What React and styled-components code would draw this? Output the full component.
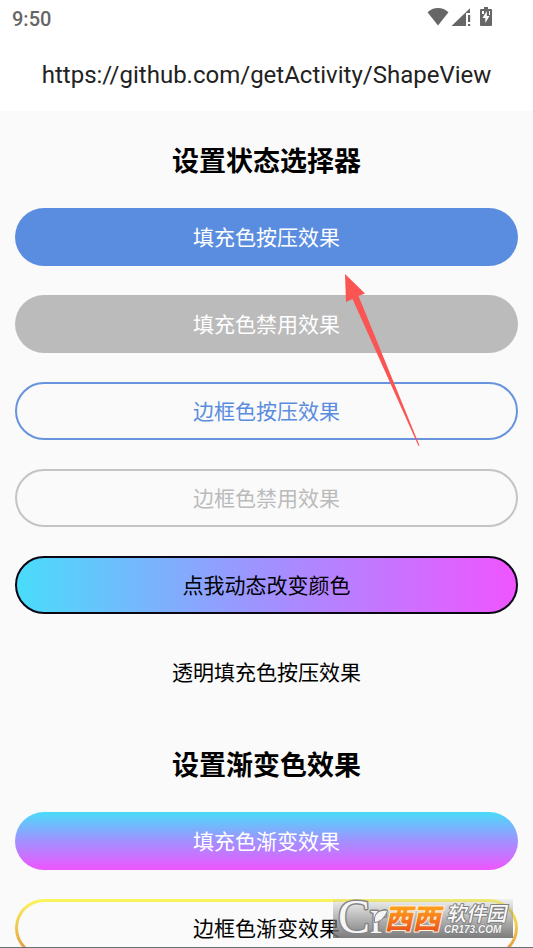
import { useState } from "react"
import styled, { createGlobalStyle, css } from "styled-components"

const GlobalStyle = createGlobalStyle`
  * {
    box-sizing: border-box;
  }
  body {
    margin: 0;
    background: #fafafa;
    font-family: Roboto, "Noto Sans CJK SC", sans-serif;
  }
`

const StatusIcons = () => (
  <svg width="66" height="20" viewBox="0 0 66 20" fill="#666" aria-hidden="true">
    <path d="M11 18.500 0.500 5.200C3.500 2.500 7 1 11 1s7.500 1.500 10.500 4.200z" />
    <path d="M43 1.200V6h-4v13H24.500z" />
    <path d="M41 8h2.200v7H41zM41 17h2.200v2H41z" />
    <path
      fillRule="evenodd"
      d="M57 0h4v2h3q1 0 1 1v15q0 1-1 1H54q-1 0-1-1V3q0-1 1-1h3zM59.800 4l-4.300 7h2.800v5l4.200-7h-2.700z"
    />
    <path d="M55 4h2v3h-2zM62 4h1v4h-1z" fill="#fff" />
  </svg>
)

const PointerArrow = () => (
  <svg width="78" height="176" viewBox="0 0 78 176" aria-hidden="true">
    <path d="M1 2 21 21.500 14.500 24 75.500 173.500 74.500 174 8.500 27 2 30z" fill="#fa5552" />
  </svg>
)

const LogoMark = () => (
  <svg width="180" height="39" viewBox="0 0 180 39" overflow="visible" role="img" aria-label="CR173.COM">
    <defs>
      <linearGradient id="badgeOrange" x1="0" y1="0" x2="0" y2="1">
        <stop offset="0.3" stopColor="#ff9c1c" />
        <stop offset="0.9" stopColor="#e8501c" />
      </linearGradient>
    </defs>
    <g stroke="#858585" strokeWidth="3" paintOrder="stroke" strokeLinejoin="round" fill="#f5f5f5">
      <text x="5" y="34" fontFamily="Liberation Serif, serif" fontSize="48">Cr</text>
      <path d="M42 23C41 14 47 11 54 12q-4 10-12 11z" strokeWidth="2" />
    </g>
    <g
      transform="skewX(-12)"
      fontFamily="'Noto Sans CJK SC', sans-serif"
      fontWeight="900"
      paintOrder="stroke"
      strokeLinejoin="round"
    >
      <text x="58" y="30" fontSize="28" fill="url(#badgeOrange)" stroke="#fff2df" strokeWidth="2">西西</text>
      <text x="118" y="22" fontSize="20" fontWeight="500" fill="#f8f8f8" stroke="#808080" strokeWidth="2">软件园</text>
    </g>
    <text
      x="111"
      y="34"
      fontFamily="'Liberation Sans', sans-serif"
      fontStyle="italic"
      fontSize="10"
      fontWeight="bold"
      fill="#f5f5f5"
      stroke="#777"
      strokeWidth="1"
      paintOrder="stroke"
    >
      CR173.COM
    </text>
  </svg>
)

const palettes = [
  ["#49dcfa", "#ef55ff"],
  ["#ffe66d", "#ff6b6b"],
]

const App = () => {
  const [palette, setPalette] = useState(0)
  const [from, to] = palettes[palette]

  return (
    <>
      <GlobalStyle />
      <Screen>
        <StatusBar>
          <Clock>9:50</Clock>
          <StatusIcons />
        </StatusBar>
        <TitleBar>
          <TitleLink href="https://github.com/getActivity/ShapeView">
            https://github.com/getActivity/ShapeView
          </TitleLink>
        </TitleBar>
        <Content>
          <Section>
            <Heading>设置状态选择器</Heading>
            <ShapeButton $variant="fill">填充色按压效果</ShapeButton>
            <ShapeButton $variant="fillDisabled" disabled>填充色禁用效果</ShapeButton>
            <ShapeButton $variant="stroke">边框色按压效果</ShapeButton>
            <ShapeButton $variant="strokeDisabled" disabled>边框色禁用效果</ShapeButton>
            <ShapeButton $variant="dynamic" $from={from} $to={to} onClick={() => setPalette(1 - palette)}>
              点我动态改变颜色
            </ShapeButton>
            <ShapeButton>透明填充色按压效果</ShapeButton>
          </Section>
          <Section>
            <Heading>设置渐变色效果</Heading>
            <ShapeButton $variant="gradient">填充色渐变效果</ShapeButton>
            <ShapeButton $variant="gradientStroke">边框色渐变效果</ShapeButton>
          </Section>
        </Content>
        <ArrowLayer>
          <PointerArrow />
        </ArrowLayer>
        <Badge>
          <LogoMark />
        </Badge>
      </Screen>
    </>
  )
}

const Screen = styled.div`
  position: relative;
  display: flex;
  flex-direction: column;
  height: 100vh;
  overflow: hidden;
  border-bottom: 1px solid #6c7073;
`

const StatusBar = styled.div`
  display: flex;
  align-items: center;
  justify-content: space-between;
  height: 38px;
  padding: 0 40px 4px 12px;
  background: #fff;
  flex-shrink: 0;
`

const Clock = styled.span`
  padding-top: 4px;
  color: #666;
  font-size: 20px;
  font-weight: 500;
  line-height: 24px;
`

const TitleBar = styled.header`
  display: flex;
  align-items: center;
  justify-content: center;
  height: 73px;
  background: #fff;
  flex-shrink: 0;
`

const TitleLink = styled.a`
  color: #222;
  font-size: 24px;
  line-height: 32px;
  text-decoration: none;
`

const Content = styled.main`
  flex: 1;
  min-height: 0;
  overflow-y: auto;
  scrollbar-width: none;
`

const Section = styled.section`
  display: flex;
  flex-direction: column;
  gap: 29px;
  padding: 0 15px 14px;
`

const Heading = styled.h2`
  margin: 0;
  padding-top: 34px;
  color: #000;
  font-size: 27px;
  font-weight: bold;
  line-height: 34px;
  text-align: center;
`

const variants = {
  fill: css`
    background: #5a8ddf;
    color: #fff;
    &:active {
      background: #3f73c6;
    }
  `,
  fillDisabled: css`
    background: #bbb;
    color: #fff;
  `,
  stroke: css`
    border: 2px solid #6794dc;
    color: #5a8ddf;
  `,
  strokeDisabled: css`
    border: 2px solid #c4c4c4;
    color: #bbb;
  `,
  dynamic: css`
    border: 2px solid #0a0614;
    background: linear-gradient(90deg, ${props => props.$from}, #a191ff, ${props => props.$to});
  `,
  gradient: css`
    background: linear-gradient(#49dcfa, #a191ff, #ef55ff);
    color: #fff;
  `,
  gradientStroke: css`
    border: 3px solid transparent;
    background:
      linear-gradient(#fafafa, #fafafa) padding-box,
      linear-gradient(#fbf65c, #e2903f) border-box;
  `,
}

const ShapeButton = styled.button`
  display: flex;
  align-items: center;
  justify-content: center;
  width: 100%;
  height: 58px;
  padding: 2px 0 0;
  border: 0;
  border-radius: 29px;
  background: transparent;
  color: #000;
  font-family: inherit;
  font-size: 21px;
  line-height: 30px;
  flex-shrink: 0;
  ${props => variants[props.$variant]}
`

const ArrowLayer = styled.div`
  position: absolute;
  top: 272px;
  left: calc(50% + 77px);
  pointer-events: none;
  svg {
    display: block;
  }
`

const Badge = styled.div`
  position: absolute;
  right: 20px;
  bottom: 9px;
  background: linear-gradient(rgba(200, 200, 200, 0.2), rgba(110, 110, 110, 0.9));
  svg {
    display: block;
  }
`

export default App
